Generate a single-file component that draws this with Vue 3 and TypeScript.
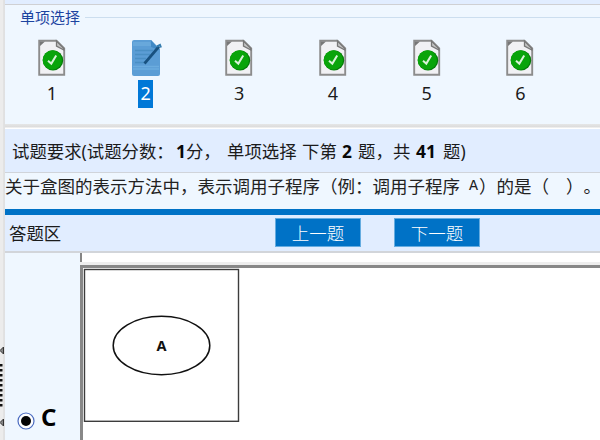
<script setup lang="ts">
interface Question {
  id: number
  done: boolean
  label: string
}

const questions: Question[] = [1, 2, 3, 4, 5, 6, 7].map((id) => ({
  id,
  done: id !== 2,
  label: id < 7 ? String(id) : '',
}))
const current = 2
</script>

<template>
  <div class="window">
    <aside class="splitter">
      <svg width="5" height="440" viewBox="0 0 5 440">
        <path d="M3.5 347 L0 350.5 L3.5 354 Z M3.5 419 L0 422.5 L3.5 426 Z" fill="#888" stroke="#333" stroke-width="1" />
        <path d="M1.2 364 V407" stroke="#111" stroke-width="2.6" stroke-dasharray="2.4 2.6" />
      </svg>
    </aside>
    <main class="content">
      <div class="topbar"></div>
      <section class="picker">
        <div class="legend"><span class="legend-text">单项选择</span><i class="rule"></i></div>
        <div class="items">
          <div v-for="q in questions" :key="q.id" class="item">
            <svg v-if="q.done" class="icon" width="32" height="40" viewBox="0 0 32 40">
              <path d="M3.2 2.8 H20.5 L28.2 10.5 V36.8 H3.2 Z" fill="#f1f1f4" stroke="#8c8c8c" stroke-width="1.9" />
              <path d="M4 3.5 H9 L4 8 Z" fill="#777" />
              <path d="M20.5 3 V8 L27.8 12 V10.5 Z" fill="#c4c4c4" stroke="#777" stroke-width="1.3" />
              <circle cx="17" cy="22.4" r="10.2" fill="#067a0a" />
              <circle cx="16.3" cy="22" r="9.7" fill="#09a40a" />
              <path d="M12 22.8 L15.3 25.6 L20.2 17.4" fill="none" stroke="#d9f2d8" stroke-width="2" />
            </svg>
            <svg v-else class="icon" width="32" height="40" viewBox="0 0 32 40">
              <path d="M4 2 H21 L30 11 V36 Q30 38 28 38 H4 Q2 38 2 36 V4 Q2 2 4 2 Z" fill="#5b9dd5" />
              <path d="M3 4 H20 L22 8 H3 Z" fill="#68a8db" />
              <path d="M21 2 V9 L29.5 12 Z" fill="#4089c5" />
              <path d="M5 12.5 H23 M5 16.5 H20 M5 20.5 H16 M5 24.5 H15" stroke="#4a8fc4" stroke-width="1.4" />
              <path d="M3 28.5 H29 M3 31 H29" stroke="#6bacde" stroke-width="1.4" />
              <path d="M14.5 25.5 L29 8.5" stroke="#18517f" stroke-width="2.7" />
              <path d="M27 8.5 L30 7 L31 9.5" fill="none" stroke="#347caf" stroke-width="2" />
            </svg>
            <span v-if="q.label" class="number" :class="{ selected: q.id === current }">{{ q.label }}</span>
          </div>
        </div>
      </section>
      <div class="divider"></div>
      <header class="heading">
        <span class="h-a">试题要求(试题分数：</span><span class="h-b"><b>1</b>分，</span><span class="h-c">单项选择</span><span class="h-d">下第</span><b class="h-e">2</b><span class="h-f">题，</span><span class="h-g">共</span><b class="h-h">41</b><span>题)</span>
      </header>
      <p class="question"><span class="q-main">关于盒图的表示方法中，表示调用子程序（例：调用子程序</span><span class="q-letter">A</span><span class="q-mid">）的是（</span><span>）。</span></p>
      <header class="answer-head">
        <span class="answer-title">答题区</span>
        <button class="nav">上一题</button>
        <button class="nav">下一题</button>
      </header>
      <div class="answers">
        <label class="choice">
          <svg width="18" height="18" viewBox="0 0 18 18">
            <circle cx="9" cy="9" r="8" fill="#fff" stroke="#4a6bc0" stroke-width="1.2" />
            <circle cx="9" cy="9" r="5" fill="#050505" />
          </svg>
          <b>C</b>
        </label>
        <div class="options">
          <div class="previous"></div>
          <div class="gap"></div>
          <div class="frame">
            <svg width="160" height="160" viewBox="0 0 160 160">
              <rect x="2.5" y="2.5" width="154" height="151.8" fill="#fff" stroke="#3c3c3c" stroke-width="1.4" />
              <ellipse cx="79.5" cy="78.5" rx="48.3" ry="29.2" fill="none" stroke="#111" stroke-width="1.5" />
              <text x="79.5" y="84.3" text-anchor="middle" class="node">A</text>
            </svg>
          </div>
        </div>
      </div>
    </main>
  </div>
</template>

<style>
body {
  margin: 0;
  overflow: hidden;
}
</style>

<style scoped>
* {
  box-sizing: border-box;
}
.window {
  display: flex;
  width: 600px;
  height: 440px;
  overflow: hidden;
  background: #eff7ff;
  color: #1b1b1b;
  font-family: "Noto Sans", "Noto Sans CJK SC", sans-serif;
  font-size: 17.4px;
  text-spacing-trim: space-all;
}
.splitter {
  flex: 0 0 5px;
  background: linear-gradient(90deg, #ececec 0 3px, #d8d8d8 4px, #e8e9eb 5px);
}
.splitter svg {
  display: block;
}
.content {
  flex: 0 0 595px;
  overflow: hidden;
}
.topbar {
  height: 5px;
  background: #e1edff;
  border-bottom: 1px solid #cfd0d3;
}
.picker {
  height: 119px;
  overflow: hidden;
}
.legend {
  display: flex;
  align-items: center;
  height: 25px;
  padding-left: 15px;
  color: #1c43a0;
  font-size: 15px;
}
.legend-text {
  flex: 0 0 65px;
  padding-bottom: 2px;
  white-space: nowrap;
}
.rule {
  flex: 1;
  height: 1px;
  background: #ccdeef;
}
.items {
  display: flex;
  width: 660px;
  padding-top: 8px;
}
.item {
  display: flex;
  flex: 0 0 93.7px;
  flex-direction: column;
  align-items: center;
}
.icon {
  display: block;
}
.number {
  height: 28px;
  margin-top: 2px;
  padding: 0 2.5px;
  line-height: 27px;
  font-size: 18px;
}
.selected {
  background: #0078d7;
  color: #fff;
}
.divider {
  height: 5px;
  background: linear-gradient(#e5e6e7, #dcdcdc 3px, #fff 4px);
}
.heading {
  display: flex;
  align-items: center;
  height: 44px;
  padding-left: 7px;
  background: #e1edff;
  border-bottom: 1px solid #d0d4da;
  white-space: nowrap;
}
.heading b {
  color: #080808;
}
.h-a {
  flex: 0 0 164px;
}
.h-b {
  flex: 0 0 51px;
}
.h-c {
  flex: 0 0 75px;
}
.h-d {
  flex: 0 0 40px;
}
.h-e {
  flex: 0 0 16px;
}
.h-f {
  flex: 0 0 35px;
}
.h-g {
  flex: 0 0 23px;
}
.h-h {
  flex: 0 0 27px;
}
.question {
  display: flex;
  height: 36px;
  margin: 0;
  color: #222;
  font-family: "Noto Sans CJK SC", sans-serif;
  font-size: 17.5px;
  line-height: 25px;
  white-space: nowrap;
}
.q-main {
  flex: 0 0 464px;
}
.q-letter {
  flex: 0 0 10px;
  padding-top: 1px;
  font-family: "Liberation Mono", monospace;
  font-size: 15px;
}
.q-mid {
  flex: 0 0 87px;
}
.answer-head {
  display: flex;
  align-items: flex-start;
  height: 44px;
  padding-left: 4px;
  background: #e1edff;
  border-top: 6px solid #0072c6;
  border-bottom: 2px solid #d2d5da;
}
.answer-title {
  flex: 0 0 266px;
  line-height: 37px;
}
.nav {
  width: 86px;
  height: 29px;
  margin: 3px 33px 0 0;
  padding: 0;
  border: 1px solid #65ace0;
  background: #0072c6;
  color: #fff;
  font-family: "Noto Sans CJK SC", sans-serif;
  font-size: 17.5px;
  font-weight: 300;
  line-height: 25px;
}
.answers {
  display: flex;
  height: 187px;
}
.choice {
  display: flex;
  flex: 0 0 75px;
  align-items: flex-end;
  gap: 6px;
  padding: 0 0 10px 12px;
}
.choice svg {
  display: block;
}
.choice b {
  color: #000;
  font-size: 24px;
  line-height: 27px;
}
.options {
  flex: 1;
}
.previous {
  height: 9px;
  border-left: 2px solid #858585;
  background: #fff;
}
.gap {
  height: 3px;
  background: #eee;
}
.frame {
  height: 176px;
  border-top: 3px solid #888;
  border-left: 3px solid #888;
  background: #fff;
}
.frame svg {
  display: block;
  margin-top: -1px;
  margin-left: -1px;
}
.node {
  fill: #111;
  font-size: 14.5px;
  font-weight: 700;
}
</style>
